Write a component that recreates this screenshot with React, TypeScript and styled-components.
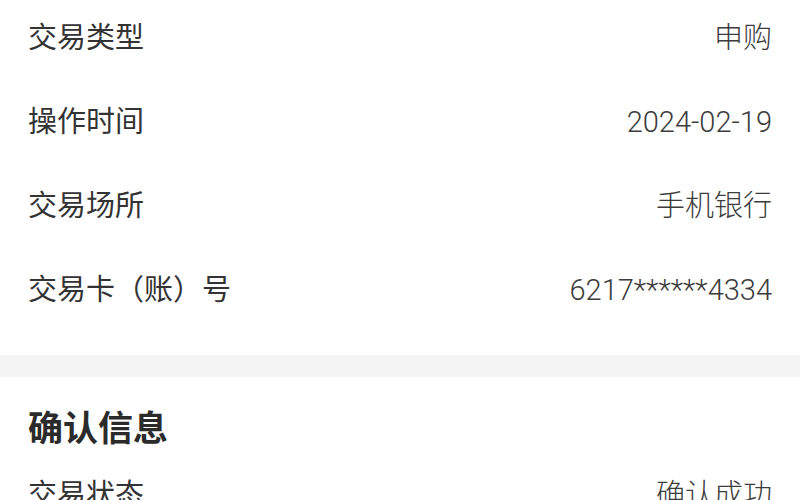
import React from "react";
import styled, { createGlobalStyle } from "styled-components";

const GlobalStyle = createGlobalStyle`
  html, body {
    margin: 0;
    padding: 0;
    background: #fff;
  }
  body {
    font-family: Roboto, "Noto Sans CJK SC", sans-serif;
    -webkit-font-smoothing: antialiased;
  }
`;

const Page = styled.div`
  width: 800px;
  height: 500px;
  overflow: hidden;
  background: #f4f4f4;
`;

const Card = styled.section<{ $pad?: string }>`
  background: #fff;
  padding: ${(p) => p.$pad || "0 28px"};
`;

const Gap = styled.div`
  height: 22px;
`;

const Title = styled.h2`
  margin: 0 0 10px;
  padding-top: 36px;
  font-size: 35px;
  line-height: 34px;
  font-weight: 700;
  color: #2b2b2b;
`;

const Row = styled.div`
  display: flex;
  justify-content: space-between;
  align-items: center;
  padding: 24px 0 32px;
  line-height: 28px;
  font-size: 29px;
`;

const Label = styled.span`
  color: #333;
  font-weight: 400;
`;

const Value = styled.span`
  color: #3c3c3c;
  font-weight: 300;
`;

const tradeRows = [
  ["交易类型", "申购"],
  ["操作时间", "2024-02-19"],
  ["交易场所", "手机银行"],
  ["交易卡（账）号", "6217******4334"],
];

const confirmRows = [["交易状态", "确认成功"]];

export default function App() {
  return (
    <>
      <GlobalStyle />
      <Page>
        <Card $pad="0 28px 19px">
          {tradeRows.map(([k, v]) => (
            <Row key={k}>
              <Label>{k}</Label>
              <Value>{v}</Value>
            </Row>
          ))}
        </Card>
        <Gap />
        <Card $pad="0 28px 40px">
          <Title>确认信息</Title>
          {confirmRows.map(([k, v]) => (
            <Row key={k}>
              <Label>{k}</Label>
              <Value>{v}</Value>
            </Row>
          ))}
        </Card>
      </Page>
    </>
  );
}
